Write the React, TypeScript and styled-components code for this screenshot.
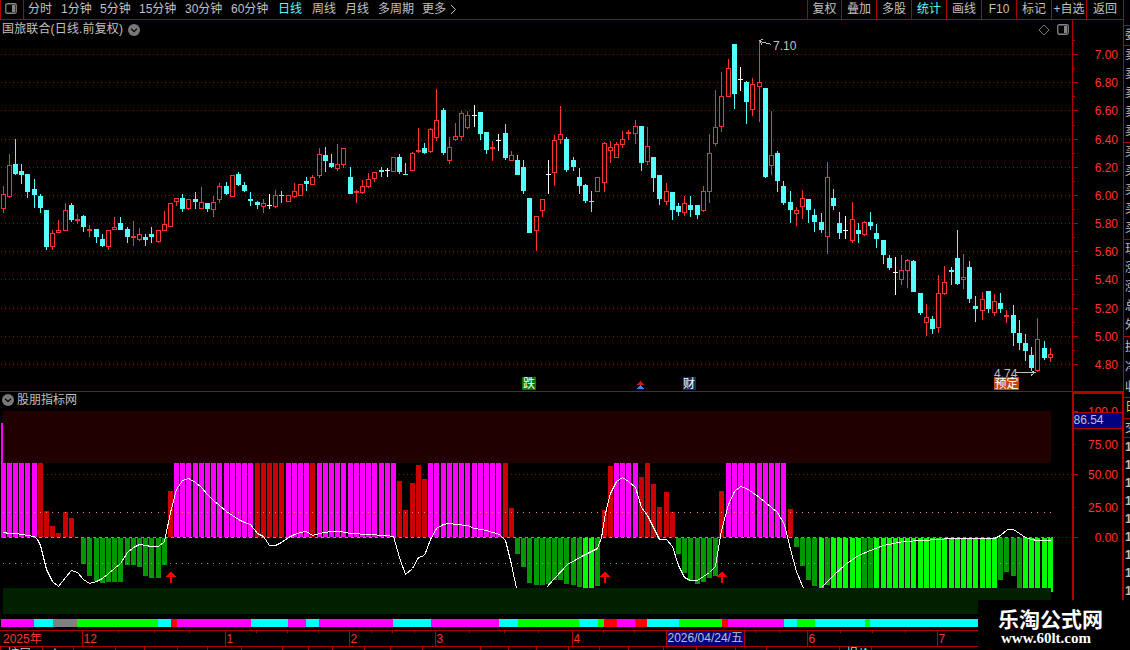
import { Fragment } from "react";
import styled, { createGlobalStyle } from "styled-components";

const LINE = "#b00000";
const UP = "#ff3232";
const DOWN = "#54ffff";
const TEXT = "#c0c0c0";

const periods = [
  "分时",
  "1分钟",
  "5分钟",
  "15分钟",
  "30分钟",
  "60分钟",
  "日线",
  "周线",
  "月线",
  "多周期",
  "更多",
];
const tools = ["复权", "叠加", "多股", "统计", "画线", "F10", "标记", "+自选", "返回"];

// r = up, c = down, w = flat; then high, body top, body bottom, low
const candles = `r186,194,209,213 r154,165,197,198 c139,164,174,175 c164,171,175,184 c174,174,192,198
c179,189,195,208 c194,196,208,213 c210,210,247,250 r230,233,247,250 r220,230,233,233
r203,210,231,231 c203,205,220,222 r214,219,221,224 c215,216,227,232 r225,229,231,237
c229,229,237,243 c234,239,246,247 r230,230,247,250 r217,227,230,230 c217,223,230,230
c227,229,237,243 r221,236,238,246 r228,234,240,241 c234,237,240,246 c227,234,237,243
r230,230,242,243 r211,224,231,231 r203,203,227,227 r198,198,202,206 c194,198,209,212
r199,199,209,210 c192,199,202,209 r187,202,209,209 c203,203,209,212 r196,202,210,217
r183,186,200,203 c182,186,194,195 r175,175,197,197 c172,174,185,186 c182,185,191,192
c192,199,201,206 c201,202,205,209 r199,203,207,213 w194,205,206,209 r190,195,207,208
c191,195,196,203 r195,195,202,202 r183,191,197,198 r184,184,196,196 c177,181,184,191
r175,177,185,185 r148,154,176,178 c147,155,161,172 c154,163,167,168 r144,164,169,171
r148,148,165,168 c167,177,194,194 r190,191,193,203 r180,186,193,194 r173,179,187,188
r172,172,179,182 c167,170,172,177 w168,170,171,177 r157,157,172,172 c154,157,172,174
c163,174,175,175 r152,153,171,171 r128,150,152,153 c143,148,153,154 r128,129,152,153
r89,120,138,141 c108,110,153,155 r137,147,161,164 r123,136,140,141 r111,113,137,141
r111,115,128,129 w105,115,116,127 c112,112,134,140 c132,132,150,154 r141,147,149,161
w134,140,141,151 c124,133,158,160 r151,155,161,161 c155,160,175,175 c160,167,191,194
c198,198,233,233 r216,216,231,251 r199,199,211,217 w160,174,175,194 r135,140,173,186
r106,134,140,144 c137,139,170,172 c157,160,167,171 c168,177,186,194 c184,185,201,203
c191,201,202,212 r177,177,192,192 r142,143,183,192 r141,147,151,163 r142,144,158,158
r131,139,145,148 r130,132,134,140 r120,126,134,144 c126,126,163,171 r127,146,162,165
c157,157,178,192 c175,175,199,205 r183,191,202,205 c192,192,210,220 c203,206,212,216
r196,203,213,216 c196,205,210,217 c205,205,215,219 r186,191,211,212 r134,153,192,203
r90,127,144,146 r72,96,127,132 r59,68,97,97 c44,44,94,109 w67,79,80,91
c81,82,102,124 r78,84,110,116 r40,82,87,122 c88,88,177,178 r111,155,166,175
c151,153,181,192 c181,186,203,205 c191,202,210,223 r207,210,214,226 r190,198,207,219
c199,199,210,223 c209,215,222,232 c213,222,230,233 r162,177,237,254 c189,198,206,210
c212,223,233,239 w216,230,231,239 r202,219,241,243 c223,230,234,243 r221,222,235,236
c212,222,226,230 c224,233,239,248 c240,240,255,264 c255,258,268,270 w257,272,273,295
r255,270,280,285 r259,260,271,288 c260,261,292,292 c293,293,313,315 r304,317,323,336
c316,319,329,334 r275,293,328,333 r266,282,294,295 c267,270,272,285 c230,258,284,285
r254,277,280,289 c261,267,299,303 c296,306,309,322 r292,299,311,320 c291,291,309,313
r294,301,313,316 c293,303,309,313 r310,315,317,323 c305,315,333,346 c320,333,343,350
c334,343,351,361 c347,355,368,371 r318,339,371,372 c341,348,358,360 r348,354,358,362`
  .split(/\s+/)
  .map((s) => ({ kind: s[0], v: s.slice(1).split(",").map(Number) }));

// kind, the y where the bar ends, how many in a row; n is empty
const histogram: [string, number, number][] = [
  ["m", 463, 6], ["d", 463, 1], ["d", 511, 1], ["d", 526, 1], ["d", 533, 1],
  ["d", 512, 1], ["d", 518, 1], ["n", 0, 1], ["g", 564, 1], ["g", 576, 1],
  ["g", 581, 1], ["g", 583, 1], ["g", 582, 3], ["g", 565, 2], ["g", 567, 1],
  ["g", 576, 1], ["g", 578, 2], ["g", 565, 1], ["d", 491, 1], ["m", 463, 13],
  ["d", 463, 5], ["m", 463, 4], ["d", 463, 1], ["m", 463, 13], ["d", 481, 1],
  ["d", 510, 1], ["d", 483, 1], ["d", 465, 1], ["d", 479, 1], ["m", 463, 12],
  ["d", 463, 1], ["d", 508, 1], ["g", 554, 1], ["g", 567, 1], ["g", 583, 1],
  ["g", 585, 2], ["g", 584, 1], ["g", 580, 2], ["g", 584, 1], ["g", 585, 1],
  ["g", 587, 1], ["b", 588, 2], ["g", 586, 1], ["d", 510, 1], ["d", 466, 1],
  ["m", 463, 4], ["d", 477, 1], ["d", 463, 1], ["d", 484, 1], ["d", 507, 1],
  ["d", 492, 1], ["d", 512, 1], ["g", 554, 1], ["g", 573, 1], ["g", 581, 1],
  ["g", 584, 1], ["g", 582, 1], ["g", 578, 1], ["g", 576, 1], ["d", 491, 1],
  ["m", 463, 10], ["d", 509, 1], ["g", 547, 1], ["g", 566, 1], ["g", 580, 1],
  ["g", 586, 1], ["b", 588, 1], ["g", 585, 1], ["b", 588, 5], ["g", 588, 2],
  ["b", 588, 20], ["g", 580, 1], ["g", 572, 1], ["g", 576, 1], ["g", 588, 1],
  ["b", 588, 5],
];
const bars = histogram.flatMap(([kind, end, n]) => Array.from({ length: n }, () => ({ kind, end })));
const barColors: Record<string, string> = { m: "#ff00ff", d: "#cc0000", g: "#009900", b: "#00ff00" };

const trend = [
  "3,532 9,533 15,533 21,534 27,535 34,536 37,539 40,545 46,569 52,581 58,586 65,577 71,570 77,572 83,579 89,583 96,581 102,578 108,573 114,568 120,563 127,552 133,547 139,544 145,545 151,546 158,546 164,541 170,512 176,489 182,480 188,478 195,482 201,487 207,494 213,500 219,505 226,511 232,515 238,519 244,522 250,524 257,533 263,536 269,545 275,545 281,542 288,537 294,534 300,532 306,531 312,535 319,533 331,531 340,531 350,533 368,534 385,535 393,536 399,557 405,574 412,568 418,557 424,555 430,539 436,528 443,524 449,523 455,524 467,525 474,528 486,530 499,534 505,540 511,564 516,588",
  "546,587 554,578 567,564 583,555 597,548 601,537 605,513 610,493 616,481 622,477 628,481 635,487 641,507 647,515 653,527 659,539 666,539 672,546 678,565 684,577 690,580 697,580 703,576 709,572 715,566 721,530 728,504 734,491 740,486 746,488 752,492 759,497 765,502 777,512 784,524 790,549 796,571 803,588",
  "821,587 833,575 845,564 858,555 870,550 883,545 903,541 923,540 950,538 994,538 1000,535 1007,529 1013,529 1019,533 1025,537 1031,539 1037,540 1050,540",
];

const ribbon: [number, string][] = [
  [33, "m"], [19, "c"], [24, "x"], [81, "b"], [13, "c"], [6, "r"], [74, "m"], [37, "c"],
  [18, "m"], [13, "c"], [74, "m"], [38, "c"], [68, "m"], [19, "c"], [61, "b"], [19, "c"],
  [6, "b"], [13, "r"], [18, "m"], [12, "r"], [32, "c"], [43, "b"], [6, "r"], [56, "m"],
  [13, "c"], [18, "b"], [50, "c"], [5, "b"], [108, "c"],
];
const ribbonColors: Record<string, string> = {
  m: "#ff00ff",
  c: "#00ffff",
  x: "#808080",
  b: "#00ff00",
  r: "#ff0000",
};

const gridY = [54, 82, 110, 139, 167, 195, 223, 251, 279, 308, 336, 364];
const minorY = [40, 68, 96, 125, 153, 181, 209, 237, 265, 294, 322, 350];
const months: [number, string][] = [[82, "12"], [225, "1"], [349, "2"], [435, "3"], [572, "4"], [807, "6"], [937, "7"]];
const weekTicks = [118, 154, 189, 256, 287, 318, 371, 392, 414, 469, 504, 538, 603, 634, 755, 779, 840, 872, 905];
const tabTicks = [0, 42, 73, 115, 144, 177, 207, 241, 282, 308, 332, 364, 390, 422, 480, 508, 536, 568, 599, 628, 663, 696, 735, 766, 839, 871];
const quoteGroups = [
  { height: 20, items: ["委"], gap: 19 },
  { height: 97, items: ["卖", "卖", "卖", "卖", "卖"], gap: 19 },
  { height: 97, items: ["买", "买", "买", "买", "买"], gap: 19 },
  { height: 97, items: ["现", "涨", "涨", "总", "外"], gap: 19 },
  { height: 61, items: ["换", "净", "收"], gap: 20 },
];

const barX = (i: number) => 3 + 6 * i + Math.floor(i * 0.1965 + 0.103);

const PanelIcon = () => (
  <svg width="12" height="11" viewBox="0 0 12 11">
    <rect x="0.75" y="0.75" width="10.5" height="9.5" rx="1.5" fill="none" stroke="#858585" strokeWidth="1.3" />
    <rect x="7" y="2" width="3" height="7" fill="#858585" />
  </svg>
);

const Toggle = () => (
  <svg width="12" height="12" viewBox="0 0 12 12">
    <circle cx="6" cy="6" r="6" fill="#787878" />
    <path d="M3 4.8 L6 7.6 L9 4.8" fill="none" stroke="#111" strokeWidth="1.4" />
  </svg>
);

const PriceChart = () => (
  <Chart width="1072" height="352" viewBox="0 39 1072 352">
    {gridY.map((y) => (
      <line key={y} x1="1" x2="1072" y1={y + 0.5} y2={y + 0.5} stroke="#a80000" strokeDasharray="1 3" />
    ))}
    {candles.map(({ kind, v: [hi, top, bottom, lo] }, i) => {
      const x = barX(i);
      const color = kind === "r" ? UP : kind === "c" ? DOWN : "#ffffff";
      const hollow = kind === "r" && bottom - top > 2;
      return (
        <Fragment key={i}>
          <rect x={x} y={hi} width="1" height={lo - hi} fill={color} />
          <rect x={x - 2} y={top} width="5" height={bottom - top} fill={color} />
          {hollow && <rect x={x - 1} y={top + 1} width="3" height={bottom - top - 2} fill="#000" />}
        </Fragment>
      );
    })}
    <path d="M771.5 44.5 L760 41.5 M763 39.5 L759.5 40.5 L762 44.5" fill="none" stroke={TEXT} />
    <text x="773" y="50" fill={TEXT}>7.10</text>
    <text x="994" y="378" fill={TEXT}>4.74</text>
    <path d="M1016 372.5 H1035 M1031 370.5 L1035 372.5 L1031 375.5" fill="none" stroke={TEXT} />
    <rect x="522" y="377" width="14" height="13" fill="#007800" />
    <text x="523" y="388" fill="#fff">跌</text>
    <path d="M640.5 381 L644 385 H637 Z" fill="#c81818" />
    <path d="M640.5 385 L644 389 H637 Z" fill="#4080ff" />
    <rect x="683" y="377" width="13" height="13" fill="#003468" />
    <text x="683" y="388" fill="#fff">财</text>
    <rect x="994" y="377" width="25" height="13" fill="#c04808" />
    <text x="994.5" y="388" fill="#fff">预定</text>
  </Chart>
);

const PriceScale = () => (
  <Chart width="51" height="371" viewBox="1072 20 51 371">
    <rect x="1072" y="20" width="1" height="371" fill={LINE} />
    {minorY.map((y) => (
      <rect key={y} x="1073" y={y} width="2" height="1" fill={LINE} />
    ))}
    {gridY.map((y, i) => (
      <Fragment key={y}>
        <rect x="1073" y={y} width="5" height="1" fill={LINE} />
        <text x="1118" y={y + 5} textAnchor="end" fill={UP}>{(7 - i * 0.2).toFixed(2)}</text>
      </Fragment>
    ))}
  </Chart>
);

const IndicatorChart = () => (
  <Chart width="1072" height="222" viewBox="0 408 1072 222">
    <rect x="3" y="411" width="1048" height="52" fill="#200000" />
    <line x1="3" x2="1072" y1="474.5" y2="474.5" stroke="#a80000" strokeDasharray="1 3" />
    <line x1="1054" x2="1072" y1="537.5" y2="537.5" stroke="#a80000" strokeDasharray="1 3" />
    <rect x="1" y="423" width="2" height="115" fill="#ff00ff" />
    {bars.map(({ kind, end }, i) => {
      if (kind === "n") return null;
      const above = kind === "m" || kind === "d";
      const x = i === 0 ? 3 : barX(i) - 2;
      return (
        <rect
          key={i}
          x={x}
          y={above ? end : 538}
          width={i === 0 ? 3 : 5}
          height={above ? 537 - end : end - 538}
          fill={barColors[kind]}
        />
      );
    })}
    <rect x="1051" y="537" width="2" height="55" fill="#00ff00" />
    <rect x="3" y="588" width="1048" height="26" fill="#002000" />
    {bars.map((_, i) => (
      <Fragment key={i}>
        <rect x={barX(i)} y="512" width="1" height="1" fill="#ff8080" />
        <rect x={barX(i)} y="563" width="1" height="1" fill="#60c060" />
      </Fragment>
    ))}
    <line x1="3" x2="1051" y1="537.5" y2="537.5" stroke="#909090" strokeDasharray="3 3" />
    {trend.map((points) => (
      <polyline key={points} points={points} transform="translate(0.5 0.5)" fill="none" stroke="#fff" />
    ))}
    {[171, 605, 722].map((x) => (
      <path key={x} d={`M${x} 571 L${x + 5} 577 H${x + 1} V583 H${x - 1} V577 H${x - 5} Z`} fill="#ff0000" />
    ))}
    {ribbon.map(([width, color], i) => {
      const x = ribbon.slice(0, i).reduce((sum, [w]) => sum + w, 1);
      return <rect key={i} x={x} y="619" width={width} height="8" fill={ribbonColors[color]} />;
    })}
  </Chart>
);

const IndicatorScale = () => (
  <Chart width="48" height="206" viewBox="1074 394 48 206">
    <text x="1118" y="416" textAnchor="end" fill={UP}>100.0</text>
    {[[411, ""], [444, "75.00"], [474, "50.00"], [507, "25.00"], [537, "0.00"]].map(([y, label]) => (
      <Fragment key={y}>
        <rect x="1074" y={y} width={y === 444 || y === 507 ? 1 : 4} height="1" fill={LINE} />
        <text x="1118" y={Number(y) + 5} textAnchor="end" fill={UP}>{label}</text>
      </Fragment>
    ))}
    <rect x="1074" y="412" width="48" height="17" fill={LINE} />
    <rect x="1074" y="413" width="48" height="15" fill="#000080" />
    <text x="1073.5" y="424" fill={TEXT}>86.54</text>
  </Chart>
);

const DateScale = () => (
  <Chart width="1123" height="20" viewBox="0 630 1123 20">
    <rect x="0" y="630" width="1123" height="1" fill={LINE} />
    <rect x="0" y="646" width="1123" height="1" fill={LINE} />
    {weekTicks.map((x) => (
      <rect key={x} x={x} y="631" width="1" height="2" fill={LINE} />
    ))}
    <text x="3" y="643" fill={UP}>2025年</text>
    {months.map(([x, label]) => (
      <Fragment key={x}>
        <rect x={x} y="631" width="1" height="15" fill={LINE} />
        <text x={x + 1.5} y="643" fill={UP}>{label}</text>
      </Fragment>
    ))}
    <rect x="666" y="631" width="79" height="15" fill={LINE} />
    <rect x="667" y="631" width="77" height="15" fill="#000080" />
    <text x="667.5" y="642" fill={TEXT}>2026/04/24/五</text>
    {tabTicks.map((x) => (
      <rect key={x} x={x} y="647" width="1" height="3" fill={LINE} />
    ))}
    <text x="7" y="658" fill={TEXT}>扩展</text>
    <text x="49" y="658" fill={TEXT}>∧</text>
    <text x="846" y="658" fill={DOWN}>报价</text>
  </Chart>
);

export default function App() {
  return (
    <Page>
      <GlobalStyle />
      <Main>
        <Toolbar>
          <IconCell>
            <PanelIcon />
          </IconCell>
          <Periods>
            {periods.map((name) => (
              <Period key={name} $active={name === "日线"}>
                {name}
              </Period>
            ))}
            <svg width="7" height="11" viewBox="0 0 7 11">
              <path d="M1 1 L5.5 5.5 L1 10" fill="none" stroke={TEXT} />
            </svg>
          </Periods>
          <Tools>
            {tools.map((name) => (
              <Tool key={name} $active={name === "统计"}>
                {name}
              </Tool>
            ))}
          </Tools>
        </Toolbar>
        <Row $height={371}>
          <Column>
            <TitleRow $height={19} $gap={5}>
              <Title>国旅联合(日线.前复权)</Title>
              <Toggle />
              <TitleActions>
                <svg width="12" height="12" viewBox="0 0 12 12">
                  <path d="M6 1 L11 6 L6 11 L1 6 Z" fill="none" stroke="#787878" />
                </svg>
                <PanelIcon />
              </TitleActions>
            </TitleRow>
            <PriceChart />
          </Column>
          <PriceScale />
        </Row>
        <Divider />
        <Row $height={238}>
          <Column>
            <TitleRow $height={16} $gap={3}>
              <Toggle />
              <span>股朋指标网</span>
            </TitleRow>
            <IndicatorChart />
          </Column>
          <ScaleBox>
            <IndicatorScale />
          </ScaleBox>
        </Row>
        <DateScale />
      </Main>
      <QuoteStrip>
        {quoteGroups.map(({ height, items, gap }, i) => (
          <QuoteGroup key={i} $height={height}>
            {items.map((item, n) => (
              <QuoteCell key={n} $height={gap}>
                {item}
              </QuoteCell>
            ))}
          </QuoteGroup>
        ))}
        <QuoteGroup $height={21}>
          <QuoteCell $height={19} $color="#d8d800">
            日
          </QuoteCell>
        </QuoteGroup>
        <QuoteGroup $height={19}>
          <QuoteCell $height={18}>交</QuoteCell>
        </QuoteGroup>
        <QuoteGroup $height={213}>
          {Array.from({ length: 9 }, (_, i) => (
            <QuoteTime key={i}>1</QuoteTime>
          ))}
        </QuoteGroup>
      </QuoteStrip>
      <Watermark>
        <SiteName>乐淘公式网</SiteName>
        <SiteUrl>www.60lt.com</SiteUrl>
      </Watermark>
    </Page>
  );
}

const GlobalStyle = createGlobalStyle`
  body {
    margin: 0;
    background: #000;
    overflow: hidden;
  }
`;

const Page = styled.div`
  position: relative;
  width: 1130px;
  height: 650px;
  display: flex;
  overflow: hidden;
  background: #000;
  color: ${TEXT};
  font: 12px "Liberation Sans", "Noto Sans CJK SC", sans-serif;
  white-space: nowrap;

  svg {
    display: block;
    flex: none;
  }
`;

const Main = styled.div`
  width: 1123px;
  flex: none;
  display: flex;
  flex-direction: column;
`;

const Toolbar = styled.div`
  height: 20px;
  box-sizing: border-box;
  display: flex;
  justify-content: space-between;
  border-bottom: 1px solid ${LINE};
  line-height: 19px;
`;

const IconCell = styled.div`
  width: 24px;
  box-sizing: border-box;
  display: flex;
  justify-content: center;
  padding: 3px 2px 0 0;
  border-left: 1px solid ${LINE};
  border-right: 1px solid ${LINE};
`;

const Periods = styled.div`
  flex: 1;
  display: grid;
  grid-template-columns: 33px 39px 39px 46px 46px 47px 34px 33px 33px 44px 28px 7px;
  align-items: center;
  padding-left: 4px;
`;

const Period = styled.div<{ $active: boolean }>`
  color: ${({ $active }) => ($active ? DOWN : TEXT)};
`;

const Tools = styled.div`
  display: grid;
  grid-template-columns: 34px repeat(7, 35px) 37px;
`;

const Tool = styled.div<{ $active: boolean }>`
  display: flex;
  justify-content: center;
  border-left: 1px solid ${LINE};
  color: ${({ $active }) => ($active ? DOWN : TEXT)};
`;

const Row = styled.div<{ $height: number }>`
  height: ${({ $height }) => $height}px;
  display: flex;
`;

const Column = styled.div`
  width: 1072px;
  flex: none;
`;

const TitleRow = styled.div<{ $height: number; $gap: number }>`
  height: ${({ $height }) => $height}px;
  line-height: ${({ $height }) => $height}px;
  display: flex;
  align-items: center;
  gap: ${({ $gap }) => $gap}px;
  padding: 0 3px 0 2px;
`;

const Title = styled.span`
  letter-spacing: 0.15px;
`;

const TitleActions = styled.div`
  margin-left: auto;
  display: flex;
  align-items: center;
  gap: 7px;
`;

const Divider = styled.div`
  height: 1px;
  background: ${LINE};
`;

const ScaleBox = styled.div`
  width: 51px;
  height: 208px;
  box-sizing: border-box;
  border: solid ${LINE};
  border-width: 2px 1px 0 2px;
`;

const Chart = styled.svg`
  shape-rendering: crispEdges;
  font: 12px "Liberation Sans", "Noto Sans CJK SC", sans-serif;
`;

const QuoteStrip = styled.div`
  width: 7px;
  height: 650px;
  box-sizing: border-box;
  flex: none;
  overflow: hidden;
  border-left: 1px solid ${LINE};
  padding-top: 25px;
`;

const QuoteGroup = styled.div<{ $height: number }>`
  height: ${({ $height }) => $height}px;
  box-sizing: border-box;
  border-top: 1px solid ${LINE};
  padding-left: 1px;
`;

const QuoteCell = styled.div<{ $height: number; $color?: string }>`
  height: ${({ $height }) => $height}px;
  line-height: ${({ $height }) => $height}px;
  color: ${({ $color }) => $color || TEXT};
`;

const QuoteTime = styled.div`
  height: 18px;
  line-height: 19px;
  font-weight: bold;
`;

const Watermark = styled.div`
  position: absolute;
  right: 0;
  bottom: 0;
  width: 152px;
  height: 50px;
  box-sizing: border-box;
  padding: 6px 0 0 20px;
  background: #000;
  color: #fff;
`;

const SiteName = styled.div`
  font: bold 21px/25px "Noto Sans CJK SC", sans-serif;
`;

const SiteUrl = styled.div`
  padding-left: 3px;
  font: bold 15px/15px "Liberation Serif", serif;
`;
